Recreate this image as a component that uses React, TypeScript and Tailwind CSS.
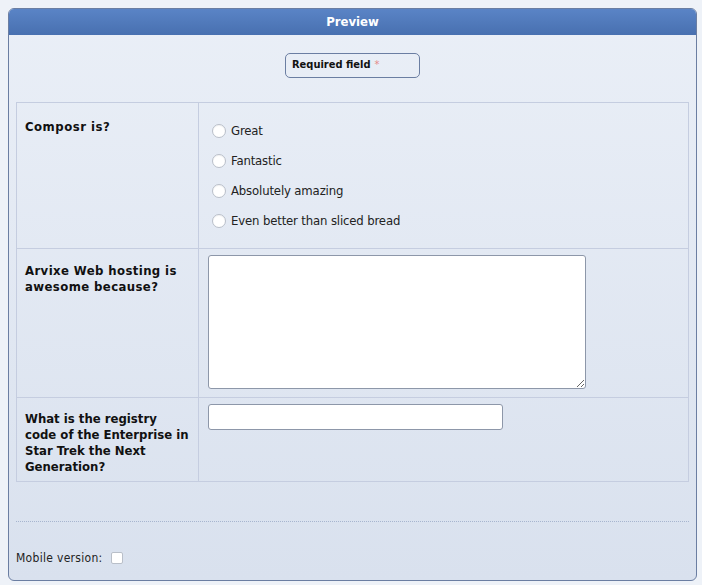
import React from "react";

const font = { fontFamily: '"DejaVu Sans Condensed", "DejaVu Sans", Tahoma, sans-serif' };

function Radio({ label }: { label: string }) {
  return (
    <label className="flex items-center h-[30px] text-[13px] text-[#222] tracking-[-0.15px]">
      <span className="w-[14px] h-[14px] rounded-full border border-[#b9bfc9] bg-white ml-[4px] mr-[5px] shadow-[inset_0_1px_1px_rgba(0,0,0,0.05)]" />
      {label}
    </label>
  );
}

export default function App() {
  return (
    <div className="w-[702px] h-[585px] bg-[#eef2f8] pt-[8px] px-[8px]" style={font}>
      <div className="w-[689px] h-[573px] rounded-[6px] border border-[#6b7ea2] overflow-hidden flex flex-col bg-gradient-to-b from-[#eaeff7] to-[#d9e1ee]">
        <div className="h-[26px] shrink-0 bg-gradient-to-b from-[#5a84c6] to-[#4870b0] flex items-center justify-center text-white font-bold text-[13px]">
          Preview
        </div>
        <div className="flex justify-center pt-[18px]">
          <div className="w-[135px] h-[25px] rounded-[5px] border border-[#6b7ea2] flex items-center pl-[6px] text-[11px] font-bold text-[#111]">
            Required field <span className="text-[#e58a8a] ml-[4px] font-normal">*</span>
          </div>
        </div>
        <div className="mx-[7px] mt-[24px] border border-[#c5cde0]">
          <div className="flex h-[146px] border-b border-[#c5cde0]">
            <div className="w-[182px] shrink-0 border-r border-[#c5cde0] pl-[8px] pt-[14px] text-[13px] font-bold text-[#111] tracking-[0.5px]">
              Composr is?
            </div>
            <div className="pl-[9px] pt-[13px]">
              <Radio label="Great" />
              <Radio label="Fantastic" />
              <Radio label="Absolutely amazing" />
              <Radio label="Even better than sliced bread" />
            </div>
          </div>
          <div className="flex h-[149px] border-b border-[#c5cde0]">
            <div className="w-[182px] shrink-0 border-r border-[#c5cde0] pl-[8px] pt-[14px] text-[13px] font-bold text-[#111] leading-[16px] tracking-[0.4px] whitespace-nowrap">
              Arvixe Web hosting is
              <br />
              awesome because?
            </div>
            <div className="pl-[9px] pt-[6px]">
              <textarea className="w-[378px] h-[134px] bg-white border border-[#8d97a9] rounded-[3px] block" />
            </div>
          </div>
          <div className="flex h-[83px]">
            <div className="w-[182px] shrink-0 border-r border-[#c5cde0] pl-[8px] pt-[13px] text-[13px] font-bold text-[#111] leading-[16px] tracking-[0px] whitespace-nowrap">
              What is the registry
              <br />
              code of the Enterprise in
              <br />
              Star Trek the Next
              <br />
              Generation?
            </div>
            <div className="pl-[9px] pt-[6px]">
              <input className="w-[295px] h-[26px] bg-white border border-[#8d97a9] rounded-[3px] block" />
            </div>
          </div>
        </div>
        <div className="mx-[7px] mt-[39px] border-t border-dotted border-[#a7b5cf]" />
        <div className="flex items-center mt-[27px] pl-[7px] text-[12px] text-[#222] tracking-[0.3px]">
          Mobile version:
          <span className="ml-[8px] w-[12px] h-[12px] rounded-[2px] border border-[#b9bfc9] bg-white" />
        </div>
      </div>
    </div>
  );
}
